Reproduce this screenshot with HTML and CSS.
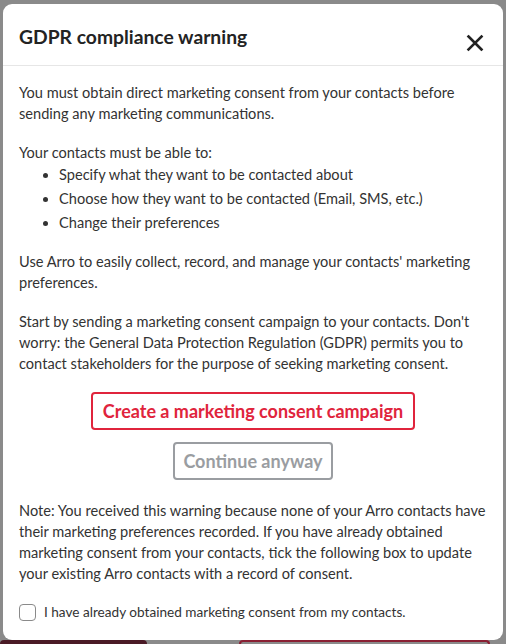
FILE: index.html
```html
<!DOCTYPE html>
<html lang="en">
<head>
<meta charset="utf-8">
<title>GDPR compliance warning</title>
<link rel="stylesheet" href="styles.css">
</head>
<body>
<div class="page">
  <div class="page-actions">
    <span class="page-btn page-btn-dark"></span>
    <span class="page-btn page-btn-red"></span>
  </div>
</div>
<div class="overlay">
  <div class="modal" role="dialog" aria-labelledby="modal-title">
    <div class="modal-header">
      <h2 id="modal-title" class="modal-title">GDPR compliance warning</h2>
      <button class="close-btn" aria-label="Close">
        <svg width="18" height="18" viewBox="0 0 18 18"><path d="M2.5 2.5L15.5 15.5M15.5 2.5L2.5 15.5" stroke="#222" stroke-width="2.6" stroke-linecap="square"/></svg>
      </button>
    </div>
    <div class="modal-body">
      <p>You must obtain direct marketing consent from your contacts before sending any marketing communications.</p>
      <div class="list-block">
        <p class="list-intro">Your contacts must be able to:</p>
        <ul class="list">
          <li>Specify what they want to be contacted about</li>
          <li>Choose how they want to be contacted (Email, SMS, etc.)</li>
          <li>Change their preferences</li>
        </ul>
      </div>
      <p>Use Arro to easily collect, record, and manage your contacts' marketing preferences.</p>
      <p>Start by sending a marketing consent campaign to your contacts. Don't worry: the General Data Protection Regulation (GDPR) permits you to contact stakeholders for the purpose of seeking marketing consent.</p>
      <div class="actions">
        <button class="btn btn-primary">Create a marketing consent campaign</button>
        <button class="btn btn-secondary">Continue anyway</button>
      </div>
      <p>Note: You received this warning because none of your Arro contacts have their marketing preferences recorded. If you have already obtained marketing consent from your contacts, tick the following box to update your existing Arro contacts with a record of consent.</p>
      <label class="check">
        <span class="check-box"></span>
        <span class="check-label">I have already obtained marketing consent from my contacts.</span>
      </label>
    </div>
  </div>
</div>
</body>
</html>
```
FILE: styles.css
```css
* { box-sizing: border-box; }
html, body { margin: 0; height: 100%; }
body {
  font-family: Lato, "Noto Sans", sans-serif;
  background: #8a8a8a;
  overflow: hidden;
}
.page {
  height: 100%;
  display: flex;
  flex-direction: column;
  justify-content: flex-end;
}
.page-actions {
  display: flex;
  gap: 92px;
  padding: 0 16px 0 0;
  height: 4px;
}
.page-btn { height: 12px; border-radius: 4px 4px 0 0; }
.page-btn-dark { width: 147px; background: #4a1a26; }
.page-btn-red { width: 252px; border: 2px solid #8a1f33; border-bottom: 0; }
.overlay {
  position: fixed;
  inset: 0;
  padding: 4px 3px;
}
.modal {
  height: 636px;
  background: #fff;
  border-radius: 9px;
  color: #333;
  display: flex;
  flex-direction: column;
}
.modal-header {
  display: flex;
  align-items: center;
  justify-content: space-between;
  height: 62px;
  padding: 0 19px 0 16px;
  border-bottom: 1px solid #e6e6e6;
}
.modal-title {
  margin: 0;
  font-size: 19.3px;
  font-weight: 700;
  color: #232323;
  position: relative;
  top: 2px;
}
.close-btn {
  border: 0;
  background: none;
  padding: 0;
  width: 18px;
  height: 18px;
  display: flex;
  position: relative;
  top: 8px;
}
.modal-body {
  padding: 16px 16px 0;
  font-size: 14.6px;
  line-height: 21px;
  display: flex;
  flex-direction: column;
  gap: 18px;
}
.modal-body p { margin: 0; }
.list { margin: 0; padding-left: 40px; }
.list li { line-height: 21px; margin-top: 3px; }
.list li:first-child { margin-top: 1px; }
.actions {
  display: flex;
  flex-direction: column;
  align-items: center;
  gap: 12px;
  padding: 0 0 2px;
}
.btn {
  font-family: inherit;
  font-size: 18px;
  font-weight: 700;
  background: #fff;
  border-radius: 4px;
  height: 38px;
  padding: 0 10px;
}
.btn-primary { color: #e0243c; border: 2px solid #e0243c; }
.btn-secondary { color: #9a9da1; border: 2px solid #9a9da1; padding: 0 8px; }
.check {
  display: flex;
  align-items: center;
  gap: 8px;
}
.check-label { font-size: 13.6px; }
.check-box {
  width: 17px;
  height: 17px;
  border: 1px solid #8a8a8a;
  border-radius: 4px;
}
```
